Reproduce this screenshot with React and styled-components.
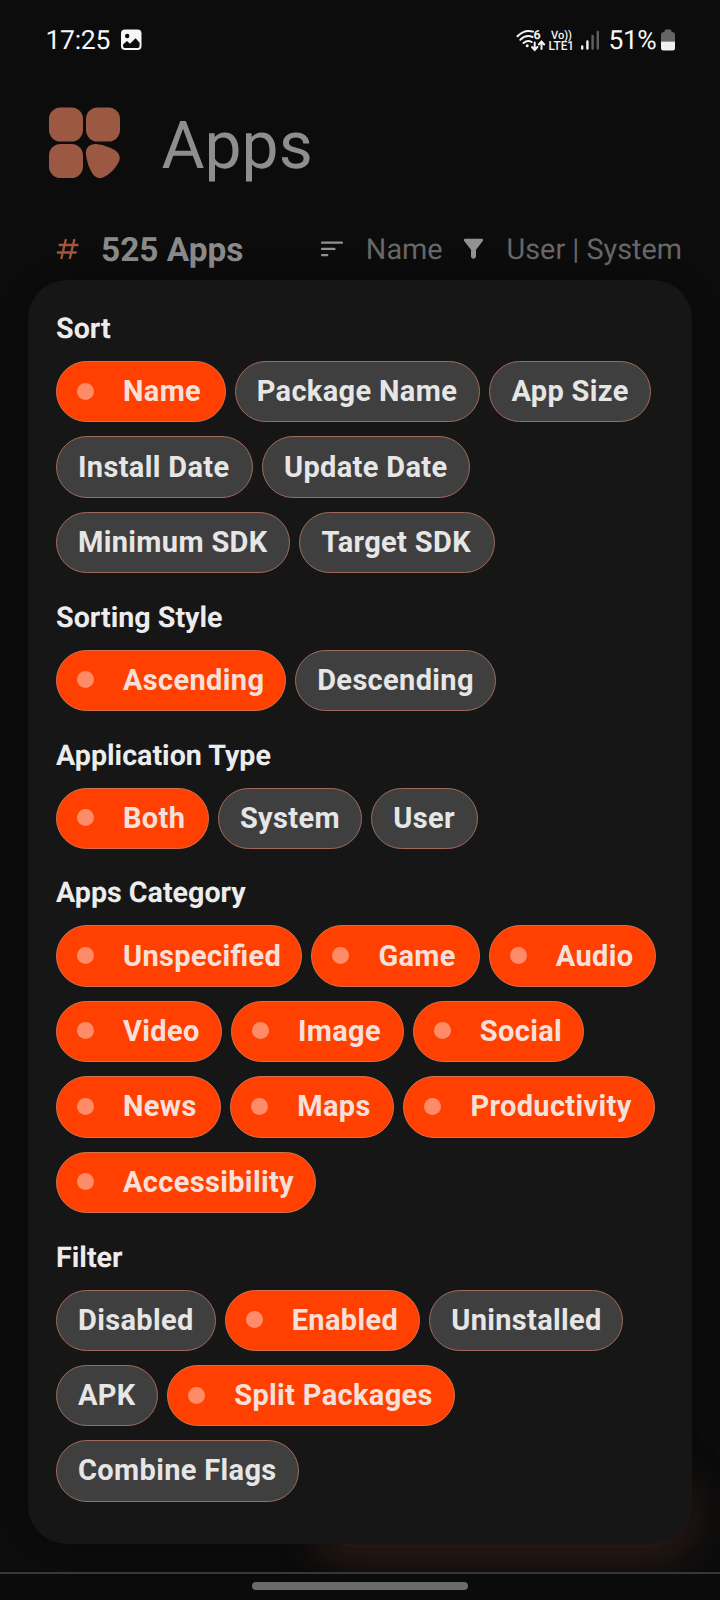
import React from "react";
import styled, { createGlobalStyle } from "styled-components";

const GlobalStyle = createGlobalStyle`
  * { box-sizing: border-box; }
  html, body { margin: 0; padding: 0; background: #0c0c0c; }
  body { font-family: Roboto, "Liberation Sans", sans-serif; text-rendering: geometricPrecision; }
`;

const Screen = styled.main`
  position: relative;
  display: flex;
  flex-direction: column;
  width: 720px;
  height: 1600px;
  overflow: hidden;
  background: #0c0c0c;
`;

const StatusBar = styled.div`
  display: flex;
  align-items: center;
  justify-content: space-between;
  height: 80px;
  padding: 0 45px 0 45.5px;
  color: #f6f6f6;
  font-size: 26.5px;
  line-height: 30px;
`;

const StatusGroup = styled.div`
  display: flex;
  align-items: center;
`;

const Clock = styled.span`
  width: 75px;
  margin-top: 1px;
  letter-spacing: -0.3px;
`;

const Percent = styled.span`
  width: 52.5px;
  margin: 1px 0 0 9px;
  letter-spacing: -0.5px;
  white-space: nowrap;
`;

const TitleBar = styled.header`
  display: flex;
  align-items: center;
  gap: 40.5px;
  height: 126px;
  padding: 0 48px;
  color: #8e8e8e;
`;

const Title = styled.h1`
  margin: 7px 0 0;
  font-size: 66px;
  font-weight: 400;
  line-height: 80px;
`;

const SummaryBar = styled.div`
  display: flex;
  align-items: center;
  height: 74px;
  padding: 15px 38px 0 56px;
  line-height: 40px;
  white-space: nowrap;
`;

const Count = styled.strong`
  flex: 1;
  margin: 1px 0 0 21px;
  font-size: 33.4px;
  font-weight: 700;
  color: #8a8a8a;
`;

const Criterion = styled.span`
  margin: -1px 0 0 ${(p) => p.$gap}px;
  font-size: 28.8px;
  color: #676767;
`;

const Panel = styled.section`
  position: relative;
  z-index: 1;
  display: flex;
  flex-direction: column;
  flex: none;
  width: 664px;
  height: 1264px;
  margin: 0 28px;
  padding: 28px 28px 0;
  border-radius: 39px;
  background: #161616;
  box-shadow: 0 0 26px rgba(0, 0, 0, 0.3);
`;

const Heading = styled.h2`
  height: 40px;
  margin: 0 0 13px;
  font-size: 28.65px;
  font-weight: 700;
  line-height: 40px;
  color: #ececec;
`;

const ChipGroup = styled.div`
  display: flex;
  flex-wrap: wrap;
  gap: 14.1px 9.2px;
  margin-bottom: 23.6px;
`;

const Chip = styled.button`
  display: flex;
  align-items: center;
  justify-content: flex-start;
  width: ${(p) => p.$width}px;
  height: 61.3px;
  padding: 0 0 1px ${(p) => (p.$on ? 20 : 21)}px;
  border: 1px solid ${(p) => (p.$on ? "#d4704e" : "#a06a58")};
  border-radius: 31px;
  background: ${(p) => (p.$on ? "#ff4000" : "#3f3f3f")};
  color: ${(p) => (p.$on ? "#f7e0da" : "#e6e6e6")};
  font: 700 29px/40px Roboto, "Liberation Sans", sans-serif;
  font-feature-settings: "liga" 1;
  letter-spacing: 0.34px;
  white-space: nowrap;
`;

const Dot = styled.i`
  width: 17px;
  height: 17px;
  margin-right: 29px;
  border-radius: 50%;
  background: #ff8c68;
`;

const ButtonGlow = styled.div`
  position: absolute;
  left: 320px;
  top: 1478px;
  width: 364px;
  height: 70px;
  border-radius: 35px;
  background: #2b1b16;
  box-shadow: 0 0 32px 15px #2b1b16;
`;

const NavBar = styled.footer`
  position: relative;
  z-index: 2;
  display: flex;
  justify-content: center;
  height: 28px;
  margin-top: auto;
  padding-top: 8px;
  border-top: 2px solid #373737;
  background: #0b0b0b;
`;

const NavHandle = styled.div`
  width: 216px;
  height: 8px;
  border-radius: 4px;
  background: #6b6b6b;
`;

const Icon = styled.svg`
  display: block;
  flex: none;
  margin-left: ${(p) => p.$ml || 0}px;
  margin-top: ${(p) => p.$mt || 0}px;
`;

const PictureIcon = () => (
  <Icon width="21" height="22" viewBox="0 0 21 22">
    <rect x="0" y="0.5" width="20.5" height="20.5" rx="4" fill="#f6f6f6" />
    <circle cx="6.2" cy="7" r="2.2" fill="#0c0c0c" />
    <path d="M2 15.5 6 12l3 2.8L14.6 9.300l4 4.500v3.200q0 2-2 2H4q-2 0-2-2z" fill="#0c0c0c" />
  </Icon>
);

const WifiIcon = () => (
  <Icon width="30" height="24" viewBox="0 0 30 24" $mt={2}>
    <g fill="none" stroke="#f2f2f2" strokeWidth="2" strokeLinecap="round">
      <path d="M1.500 7.200Q8.500 0 17 2.600" />
      <path d="M4.300 10.700Q10 5.200 16.500 8" />
      <path d="M7.500 14Q11.500 10.500 15.700 13" />
      <path d="M18.700 13.500v7M16 18l2.700 3 2.700-3" />
      <path d="M25.500 20v-6.500M22.800 15.500l2.700-3 2.700 3" />
    </g>
    <circle cx="11.200" cy="16.800" r="1.500" fill="#f2f2f2" />
    <text x="17.400" y="10.300" fontSize="12.500" fontWeight="700" fill="#f2f2f2">6</text>
  </Icon>
);

const VolteIcon = () => (
  <Icon width="27" height="24" viewBox="0 0 27 24" $ml={2} $mt={2}>
    <g fill="#f2f2f2" fontWeight="500">
      <text x="3" y="9.500" fontSize="11.500" textLength="21" lengthAdjust="spacingAndGlyphs">Vo))</text>
      <text x="0.500" y="21.300" fontSize="12.500" textLength="25.500" lengthAdjust="spacingAndGlyphs">LTE1</text>
    </g>
  </Icon>
);

const SignalIcon = () => (
  <Icon width="20" height="22" viewBox="0 0 20 22" $ml={5}>
    <g fill="none" strokeWidth="2.400" strokeLinecap="round">
      <path d="M2.200 17.500v2M7.400 12.500v7" stroke="#f2f2f2" />
      <path d="M12.600 7v12.500M17.800 3v16.500" stroke="#5f5f5f" />
    </g>
  </Icon>
);

const BatteryIcon = () => (
  <Icon width="14" height="22" viewBox="0 0 14 22" $mt={-1}>
    <path d="M3.500 3V2q0-1.500 1.500-1.500h4Q10.500.5 10.500 2v1h.5q3 0 3 3v6.500H0V6q0-3 3-3z" fill="#656565" />
    <path d="M0 12.500h14V19q0 2.500-2.500 2.500h-9Q0 21.500 0 19z" fill="#f0f0f0" />
  </Icon>
);

const AppsLogo = () => (
  <Icon width="73" height="72" viewBox="0 0 73 72">
    <g fill="#9b5842">
      <rect x="1" y="0.500" width="34" height="34" rx="11.500" />
      <rect x="38" y="0.500" width="34" height="34" rx="11.500" />
      <rect x="1" y="37" width="34" height="34" rx="11.500" />
      <path d="M46.500 37C52 37 59.500 39 67 43.200Q73.500 47.800 71 54.500Q65.500 65.500 55.500 70.300Q49.500 72.800 45.500 68Q39.500 60 37.800 47Q37.500 38 46.500 37Z" />
    </g>
  </Icon>
);

const HashIcon = () => (
  <Icon width="24" height="22" viewBox="0 0 24 22" $mt={-4}>
    <path d="M9.700 2 5.500 20M18.200 2 14 20M3.500 7h18M1.800 14.500h18" fill="none" stroke="#a2573b" strokeWidth="2.300" strokeLinecap="round" />
  </Icon>
);

const SortIcon = () => (
  <Icon width="24" height="16" viewBox="0 0 24 16" $mt={-4}>
    <path d="M2 1.700h20M2 7.900h12.500M2 14.100h5.300" fill="none" stroke="#929292" strokeWidth="2.200" strokeLinecap="round" />
  </Icon>
);

const FunnelIcon = () => (
  <Icon width="21" height="21" viewBox="0 0 21 21" $ml={20} $mt={-5}>
    <path d="M1.800.700h17.400q1.500.600.700 2L13 11.700v7q-.5 2-2.500 2t-2.500-2v-7L1 2.700q-.7-1.400.800-2z" fill="#929292" />
  </Icon>
);

const on = (label, width) => ({ label, width, selected: true });
const off = (label, width) => ({ label, width, selected: false });

const sections = [
  {
    title: "Sort",
    chips: [
      on("Name", 169.5), off("Package Name", 245.5), off("App Size", 162),
      off("Install Date", 196.8), off("Update Date", 208.3),
      off("Minimum SDK", 234.3), off("Target SDK", 195.2),
    ],
  },
  { title: "Sorting Style", chips: [on("Ascending", 230), off("Descending", 201)] },
  { title: "Application Type", chips: [on("Both", 152.7), off("System", 144.2), off("User", 106.8)] },
  {
    title: "Apps Category",
    chips: [
      on("Unspecified", 246.2), on("Game", 168.2), on("Audio", 167),
      on("Video", 165.7), on("Image", 172.8), on("Social", 171.5),
      on("News", 165), on("Maps", 164), on("Productivity", 251.7),
      on("Accessibility", 259.7),
    ],
  },
  {
    title: "Filter",
    chips: [
      off("Disabled", 159.5), on("Enabled", 195.3), off("Uninstalled", 194.2),
      off("APK", 102), on("Split Packages", 288), off("Combine Flags", 243),
    ],
  },
];

export default function App() {
  return (
    <Screen>
      <GlobalStyle />
      <StatusBar>
        <StatusGroup>
          <Clock>17:25</Clock>
          <PictureIcon />
        </StatusGroup>
        <StatusGroup>
          <WifiIcon />
          <VolteIcon />
          <SignalIcon />
          <Percent>51%</Percent>
          <BatteryIcon />
        </StatusGroup>
      </StatusBar>
      <TitleBar>
        <AppsLogo />
        <Title>Apps</Title>
      </TitleBar>
      <SummaryBar>
        <HashIcon />
        <Count>525 Apps</Count>
        <SortIcon />
        <Criterion $gap={22}>Name</Criterion>
        <FunnelIcon />
        <Criterion $gap={23}>User | System</Criterion>
      </SummaryBar>
      <ButtonGlow />
      <Panel>
        {sections.map(({ title, chips }) => (
          <React.Fragment key={title}>
            <Heading>{title}</Heading>
            <ChipGroup>
              {chips.map(({ label, width, selected }) => (
                <Chip key={label} $on={selected} $width={width}>
                  {selected && <Dot />}
                  {label}
                </Chip>
              ))}
            </ChipGroup>
          </React.Fragment>
        ))}
      </Panel>
      <NavBar>
        <NavHandle />
      </NavBar>
    </Screen>
  );
}
